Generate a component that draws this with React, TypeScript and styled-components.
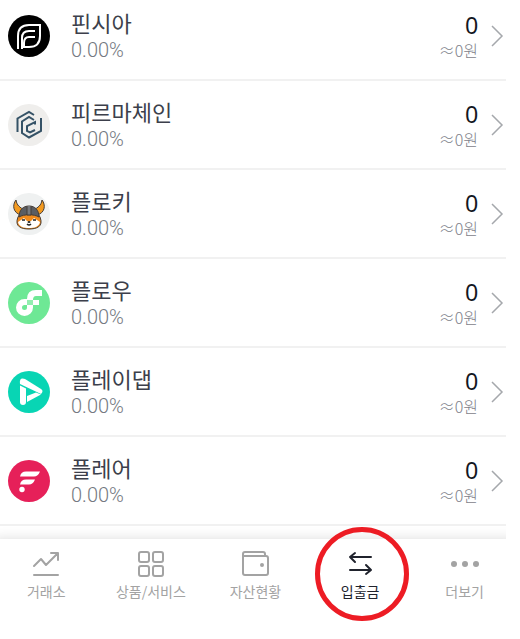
import React from "react";
import styled, { createGlobalStyle } from "styled-components";

const GlobalStyle = createGlobalStyle`
  * { box-sizing: border-box; }
  body {
    margin: 0;
    background: #fff;
    font-family: "Noto Sans CJK KR", sans-serif;
  }
`;

const Screen = styled.main`
  margin-right: 14px;
  overflow: hidden;
`;

const AssetList = styled.ul`
  margin: 0;
  padding: 0;
  list-style: none;
`;

const AssetItem = styled.li`
  border-bottom: 2px solid #f1f1f1;
  &:first-child { margin-top: -8px; }
`;

const AssetButton = styled.button`
  display: flex;
  align-items: center;
  width: 100%;
  height: 87px;
  padding: 0 2px 0 8px;
  border: 0;
  background: none;
  font-family: inherit;
  text-align: left;
`;

const Coin = styled.svg`
  flex: none;
  width: 42px;
  height: 42px;
  margin-right: 21px;
`;

const Column = styled.span<{ $end?: boolean }>`
  display: flex;
  flex-direction: column;
  flex: ${(p) => (p.$end ? "none" : "1")};
  align-items: ${(p) => (p.$end ? "flex-end" : "flex-start")};
`;

const Name = styled.span`
  font-size: 22px;
  line-height: 28px;
  color: #3c3f4b;
`;

const Rate = styled.span`
  font-family: Roboto, sans-serif;
  font-size: 20px;
  font-weight: 300;
  line-height: 28px;
  color: #747981;
`;

const Amount = styled.span`
  font-family: "Liberation Sans", sans-serif;
  font-size: 23px;
  line-height: 28px;
  color: #14171f;
`;

const Value = styled.span`
  font-size: 16px;
  line-height: 20px;
  font-weight: 300;
  color: #7e828a;
`;

const Chevron = styled.svg`
  flex: none;
  width: 13px;
  height: 22px;
  margin-left: 13px;
`;

const TabBar = styled.nav`
  display: grid;
  grid-template-columns: repeat(5, 1fr);
  margin: 13px -11px 0 -6px;
  height: 100px;
  background: #fff;
  box-shadow: 0 0 12px rgba(0, 0, 0, 0.14);
`;

const Tab = styled.a<{ $active?: boolean }>`
  position: relative;
  display: flex;
  flex-direction: column;
  align-items: center;
  padding-top: 10px;
  gap: 2px;
  font-size: 14px;
  line-height: 20px;
  white-space: nowrap;
  text-decoration: none;
  color: ${(p) => (p.$active ? "#20232d" : "#a3a3a3")};
`;

const TabIcon = styled.svg`
  width: 30px;
  height: 30px;
  fill: none;
  stroke: currentColor;
  stroke-width: 2;
  stroke-linecap: round;
  stroke-linejoin: round;
`;

const Highlight = styled.span`
  position: absolute;
  top: -12px;
  left: 50%;
  width: 94px;
  height: 94px;
  margin-left: -45px;
  border: 5px solid #ed1c24;
  border-radius: 50%;
  pointer-events: none;
`;

const FinschiaLogo = () => (
  <>
    <circle cx="21" cy="21" r="21" fill="#000" />
    <g fill="none" stroke="#fff" strokeWidth="2">
      <path d="M10 34V21Q10 10 21 10H32V21Q32 32 21 32H16V28Q16 22 21 22H27" />
      <path d="M14 34V23Q14 16 21 16H27" />
    </g>
  </>
);

const FirmaLogo = () => (
  <>
    <circle cx="21" cy="21" r="21" fill="#efeeec" />
    <g fill="none" stroke="#355266" strokeWidth="2">
      <path d="M9.500 28V14.500L21 8L26 11" />
      <path d="M26 16L21 13L14 17.500V29L21 33.500L33 27V14" />
      <path d="M27 20.500V18L19 22V27L22 28.500L27 26" />
    </g>
  </>
);

const FlokiLogo = () => (
  <>
    <circle cx="21" cy="21" r="21" fill="#eff1f1" />
    <g stroke="#453c36" strokeWidth="1" strokeLinejoin="round">
      <path d="M13 22C5 20 4 12 8 7C9 13 12 14 16 17ZM29 22C37 20 38 12 34 7C33 13 30 14 26 17Z" fill="#f39a20" />
      <path d="M10 24C6 34 14 36 21 36S36 34 32 24L30 21H12Z" fill="#f18b1c" />
      <path d="M10 29L16 25L19 28H23L26 25L32 29C31 34 26 35 21 35S11 34 10 29Z" fill="#fff" stroke="none" />
      <path d="M11 24C11 17 15 13 21 13S31 17 31 24C26 21 16 21 11 24Z" fill="#5a5d62" />
      <path d="M19 13V22H23V13" fill="#777a7e" />
    </g>
    <path d="M14 27H17M25 27H28M19 31Q21 33 23 31" stroke="#222" strokeWidth="1.500" fill="none" />
    <ellipse cx="21" cy="29" rx="1.500" ry="1" fill="#222" />
  </>
);

const FlowLogo = () => (
  <>
    <circle cx="21" cy="21" r="21" fill="#6ee895" />
    <path fillRule="evenodd" fill="#fff" d="M34 8V14H28Q25 14 25 18H31V23H25V25.500A8.500 8.500 0 1 1 16.500 17H19Q19 8 28 8ZM19 23H16.500A2.500 2.500 0 1 0 19 25.500Z" />
    <path d="M19 18H25V23H19Z" fill="#92eeaf" />
  </>
);

const PlayDappLogo = () => (
  <>
    <circle cx="21" cy="21" r="21" fill="#08d5b4" />
    <g fill="#fff">
      <path d="M12 13Q11 6 17 8L33 18Q36 20 33 23L12 13Z" />
      <path d="M12 14.500L18 17.500V31Q18 34 15 34T12 31Z" />
      <path d="M19 25L28 21.500L33 23.500L19 31Z" />
    </g>
  </>
);

const FlareLogo = () => (
  <>
    <circle cx="21" cy="21" r="21" fill="#e62059" />
    <path d="M12 16.500Q13 11.500 18 11.500H32Q30 16.500 26 16.500ZM12 24.500Q13 19.500 18 19.500H27Q25 24.500 21 24.500Z" fill="#fff" />
    <circle cx="14" cy="29.500" r="2.700" fill="#fff" />
  </>
);

const assets = [
  { name: "핀시아", Logo: FinschiaLogo },
  { name: "피르마체인", Logo: FirmaLogo },
  { name: "플로키", Logo: FlokiLogo },
  { name: "플로우", Logo: FlowLogo },
  { name: "플레이댑", Logo: PlayDappLogo },
  { name: "플레어", Logo: FlareLogo },
];

const tabs = [
  { label: "거래소", icon: <path d="M3 17L10 10L15 16L26 5M20 4H27V11M3 26H27" /> },
  {
    label: "상품/서비스",
    icon: (
      <>
        <rect x="3" y="3" width="10" height="10" rx="2" />
        <rect x="17" y="3" width="10" height="10" rx="2" />
        <rect x="3" y="17" width="10" height="10" rx="2" />
        <rect x="17" y="17" width="10" height="10" rx="2" />
      </>
    ),
  },
  {
    label: "자산현황",
    icon: (
      <>
        <path d="M3 7V24Q3 26 5 26H26Q28 26 28 24V9Q28 7 26 7H3V5Q3 3 5 3H23Q25 3 25 5V7" />
        <circle cx="22" cy="16" r="2" fill="currentColor" stroke="none" />
      </>
    ),
  },
  { label: "입출금", icon: <path d="M26 8H5M10 4L5 8L10 13M5 21H26M21 16L26 21L21 25" />, active: true },
  {
    label: "더보기",
    icon: (
      <g fill="currentColor" stroke="none">
        <circle cx="4" cy="15" r="3" />
        <circle cx="15" cy="15" r="3" />
        <circle cx="26" cy="15" r="3" />
      </g>
    ),
  },
];

export default function App() {
  return (
    <>
      <GlobalStyle />
      <Screen>
        <AssetList>
          {assets.map(({ name, Logo }) => (
            <AssetItem key={name}>
              <AssetButton type="button">
                <Coin viewBox="0 0 42 42" aria-hidden="true"><Logo /></Coin>
                <Column>
                  <Name>{name}</Name>
                  <Rate>0.00%</Rate>
                </Column>
                <Column $end>
                  <Amount>0</Amount>
                  <Value>≈0원</Value>
                </Column>
                <Chevron viewBox="0 0 13 22" fill="none" stroke="#a5a8ac" strokeWidth="1.500" aria-hidden="true">
                  <path d="M1 1L11 11L1 21" />
                </Chevron>
              </AssetButton>
            </AssetItem>
          ))}
        </AssetList>
        <TabBar>
          {tabs.map(({ label, icon, active }) => (
            <Tab key={label} href="#" $active={active} aria-current={active ? "page" : undefined}>
              <TabIcon viewBox="0 0 30 30" aria-hidden="true">{icon}</TabIcon>
              {label}
              {active && <Highlight />}
            </Tab>
          ))}
        </TabBar>
      </Screen>
    </>
  );
}
